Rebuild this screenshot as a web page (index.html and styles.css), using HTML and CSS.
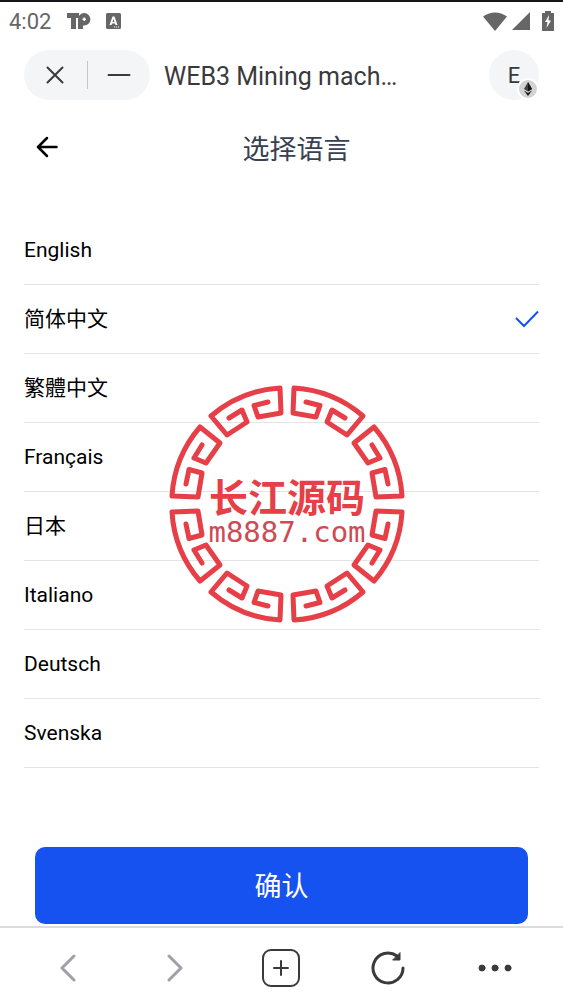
FILE: index.html
```
<!DOCTYPE html>
<html lang="zh-CN">
<head>
  <meta charset="UTF-8">
  <meta name="viewport" content="width=device-width, initial-scale=1.0">
  <title>选择语言</title>
  <link rel="stylesheet" href="styles.css">
</head>
<body>
  <div class="status-bar">
    <span class="clock">4:02</span>
    <svg class="status-tp" width="24" height="16" viewBox="0 0 24 16" aria-hidden="true">
      <path d="M0 0H12V5H9V16H4V5H0Z"/>
      <path fill-rule="evenodd" d="M11 16V6.500A6.200 6.200 0 1 1 17 12.500H16V16ZM16.500 4.500V5.500H15.500V7h1V8H18V7h1V5.500H18V4.500Z"/>
    </svg>
    <svg width="15" height="16" viewBox="0 0 15 16" aria-hidden="true">
      <path fill-rule="evenodd" d="M1.500 0h12A1.500 1.500 0 0 1 15 1.500v13a1.500 1.500 0 0 1-1.500 1.500h-12A1.500 1.500 0 0 1 0 14.500v-13A1.500 1.500 0 0 1 1.500 0ZM6.500 3.500 3.500 12h2l.5-1.500h3l.5 1.500h2l-3-8.500ZM7.500 6l1 3h-2ZM8 13.500v1h1v-1Zm2 0v1h1v-1Zm2 0v1h1v-1Z"/>
    </svg>
    <span class="status-right">
      <svg width="26" height="19" viewBox="0 0 26 19" aria-hidden="true"><path d="M1 4.500Q13-3.500 25 4.500L13 19Z"/></svg>
      <svg width="18" height="18" viewBox="0 0 18 18" aria-hidden="true"><path d="M18 0V18H0Z"/></svg>
      <svg class="battery" width="12" height="20" viewBox="0 0 12 20" aria-hidden="true"><path fill-rule="evenodd" d="M3 0h6v2h3v18H0V2h3ZM7 4 3 11h2.500L4.500 17 9 9.500H6.500Z"/></svg>
    </span>
  </div>

  <header class="app-bar">
    <div class="capsule">
      <button type="button" aria-label="关闭">
        <svg width="18" height="18" viewBox="0 0 18 18"><path d="M1.500 1.500 16.500 16.500M16.500 1.500 1.500 16.500"/></svg>
      </button>
      <button type="button" aria-label="最小化">
        <svg width="24" height="18" viewBox="0 0 24 18"><path d="M1.500 9H22.500"/></svg>
      </button>
    </div>
    <span class="app-name">WEB3 Mining mach…</span>
    <button type="button" class="account">
      E
      <svg class="chain" width="22" height="22" viewBox="0 0 22 22" aria-hidden="true">
        <circle cx="11" cy="11" r="10" fill="#d3d3d3" stroke="#fff" stroke-width="2"/>
        <path d="M11 4 7 11l4 2.500L15 11Z" fill="#444"/>
        <path d="M11 4V13.500L15 11ZM7 12.500l4 5.500 4-5.500-4 2.500Z" fill="#151515"/>
      </svg>
    </button>
  </header>

  <main>
    <div class="page-title">
      <button type="button" class="back" aria-label="返回">
        <svg width="22" height="22" viewBox="0 0 22 22"><path d="M11 2 2 11 11 20M2 11H20.500"/></svg>
      </button>
      <h1>选择语言</h1>
    </div>

    <form class="language-form">
      <div class="languages" role="radiogroup" aria-label="选择语言">
        <label lang="en"><span>English</span><input type="radio" name="language"><svg class="tick" viewBox="0 0 24 18"><path d="M1 8 9 16 23 1.500"/></svg></label>
        <label class="cjk"><span>简体中文</span><input type="radio" name="language" checked><svg class="tick" viewBox="0 0 24 18"><path d="M1 8 9 16 23 1.500"/></svg></label>
        <label class="cjk" lang="zh-TW"><span>繁體中文</span><input type="radio" name="language"><svg class="tick" viewBox="0 0 24 18"><path d="M1 8 9 16 23 1.500"/></svg></label>
        <label lang="fr"><span>Français</span><input type="radio" name="language"><svg class="tick" viewBox="0 0 24 18"><path d="M1 8 9 16 23 1.500"/></svg></label>
        <label class="cjk" lang="ja"><span>日本</span><input type="radio" name="language"><svg class="tick" viewBox="0 0 24 18"><path d="M1 8 9 16 23 1.500"/></svg></label>
        <label lang="it"><span>Italiano</span><input type="radio" name="language"><svg class="tick" viewBox="0 0 24 18"><path d="M1 8 9 16 23 1.500"/></svg></label>
        <label lang="de"><span>Deutsch</span><input type="radio" name="language"><svg class="tick" viewBox="0 0 24 18"><path d="M1 8 9 16 23 1.500"/></svg></label>
        <label lang="sv"><span>Svenska</span><input type="radio" name="language"><svg class="tick" viewBox="0 0 24 18"><path d="M1 8 9 16 23 1.500"/></svg></label>

        <svg class="seal" width="240" height="240" viewBox="-120 -120 240 240">
          <defs>
            <g id="seal-quarter">
              <path d="M-19-102-33-98.500-29-87-6-91-7-116A116 116 0 0 0-76-88L-60-69-40-82-45-94-58-86"/>
              <path d="M-85-59-93-46-81-41-67-61-87-77A116 116 0 0 0-115-8L-89-7-85-31-98-34.500-101-20"/>
            </g>
          </defs>
          <g class="seal-ring">
            <use href="#seal-quarter"/>
            <use href="#seal-quarter" transform="scale(-1 1)"/>
            <use href="#seal-quarter" transform="scale(1 -1)"/>
            <use href="#seal-quarter" transform="scale(-1 -1)"/>
          </g>
          <text class="seal-name" x="0" y="8">长江源码</text>
          <text class="seal-site" x="0" y="38">m8887.com</text>
        </svg>
      </div>

      <button type="submit" class="confirm">确认</button>
    </form>
  </main>

  <nav class="browser-bar">
    <button type="button" class="muted" aria-label="后退">
      <svg width="16" height="28" viewBox="0 0 16 28"><path d="M14 2 2 14 14 26"/></svg>
    </button>
    <button type="button" class="muted" aria-label="前进">
      <svg width="16" height="28" viewBox="0 0 16 28"><path d="M2 2 14 14 2 26"/></svg>
    </button>
    <button type="button" class="new-tab" aria-label="新标签页">
      <svg width="38" height="38" viewBox="0 0 38 38"><rect x="1" y="1" width="36" height="36" rx="8"/><path d="M19 12V26M12 19H26"/></svg>
    </button>
    <button type="button" aria-label="刷新">
      <svg width="34" height="34" viewBox="0 0 34 34"><path d="M32 17A15 15 0 1 1 26 5"/><path class="solid" d="M29 2V9H22Z"/></svg>
    </button>
    <button type="button" aria-label="更多">
      <svg width="34" height="8" viewBox="0 0 34 8"><g class="solid"><circle cx="4" cy="4" r="3"/><circle cx="17" cy="4" r="3"/><circle cx="30" cy="4" r="3"/></g></svg>
    </button>
  </nav>
</body>
</html>
```

FILE: styles.css
```
* {
  box-sizing: border-box;
}

body {
  display: flex;
  flex-direction: column;
  min-height: 100vh;
  margin: 0;
  border-top: 2px solid #15151c;
  background: #fff;
  color: #000;
  font-family: Roboto, "Noto Sans CJK SC", sans-serif;
}

button {
  display: flex;
  align-items: center;
  justify-content: center;
  padding: 0;
  border: 0;
  background: none;
  color: inherit;
  font: inherit;
  cursor: pointer;
}

button svg {
  fill: none;
  stroke: currentColor;
  stroke-width: 2;
  stroke-linecap: round;
  stroke-linejoin: round;
}

.status-bar {
  display: flex;
  align-items: center;
  height: 38px;
  padding: 0 9px;
  color: #666;
  font-size: 22px;
}

.status-bar svg {
  fill: #666;
}

.status-tp {
  margin: 0 15px 0 16px;
}

.status-right {
  display: flex;
  align-items: center;
  gap: 4px;
  margin-left: auto;
}

.battery {
  margin-left: 8px;
}

.app-bar {
  display: flex;
  align-items: center;
  padding: 10px 24px;
  color: #3a3a3c;
}

.capsule {
  display: flex;
  align-items: center;
  width: 126px;
  height: 50px;
  border-radius: 25px;
  background: #f4f5f7;
}

.capsule button {
  flex: 1;
  height: 28px;
}

.capsule button + button {
  border-left: 1px solid #c8c8ca;
}

.app-name {
  flex: 1;
  margin-left: 14px;
  padding-top: 2px;
  font-size: 25px;
  white-space: nowrap;
}

.account {
  position: relative;
  width: 50px;
  height: 50px;
  border-radius: 50%;
  background: #f4f5f7;
  font-size: 22px;
}

.chain {
  position: absolute;
  right: 0;
  bottom: 0;
}

.account .chain {
  stroke: none;
}

main {
  flex: 1;
  padding: 0 24px;
}

.page-title {
  display: grid;
  grid-template-columns: 46px 1fr 16px;
  align-items: center;
  height: 74px;
}

.back svg {
  stroke-width: 2.5;
}

.page-title h1 {
  margin: 0;
  color: #374151;
  font-size: 27px;
  font-weight: 400;
  text-align: center;
}

.languages {
  position: relative;
  margin-top: 32px;
}

.languages label {
  display: flex;
  align-items: center;
  justify-content: space-between;
  height: 69px;
  border-bottom: 1px solid #e4e4e4;
  font-size: 21px;
  cursor: pointer;
}

.languages .cjk span {
  padding-bottom: 4px;
}

.languages input {
  appearance: none;
  width: 0;
  margin: 0;
}

.tick {
  display: none;
  width: 24px;
  height: 18px;
  fill: none;
  stroke: #1652f0;
  stroke-width: 2;
}

input:checked + .tick {
  display: block;
}

/* stamp lies over the list */
.seal {
  position: absolute;
  top: 168px;
  left: calc(50% + 5px);
  transform: translateX(-50%);
  pointer-events: none;
}

.seal-ring {
  fill: none;
  stroke: #e63f48;
  stroke-width: 5;
  stroke-linecap: round;
  stroke-linejoin: round;
}

.seal text {
  text-anchor: middle;
}

.seal-name {
  fill: #e63f48;
  font-size: 39px;
  font-weight: 700;
}

.seal-site {
  fill: #cc4b54;
  font-family: "DejaVu Sans Mono", monospace;
  font-size: 29px;
}

.confirm {
  width: calc(100% - 22px);
  height: 77px;
  margin: 79px 11px 2px;
  padding-bottom: 2px;
  border-radius: 10px;
  background: #1652f0;
  color: #fff;
  font-size: 27px;
}

.browser-bar {
  display: flex;
  height: 80px;
  padding: 2px 15px 0;
  border-top: 2px solid #dcdcde;
  color: #3a3a3c;
}

.browser-bar button {
  flex: 1;
}

.browser-bar svg {
  stroke-width: 3;
}

.browser-bar .new-tab svg {
  stroke-width: 2;
}

.browser-bar .muted {
  color: #a0a0a6;
}

.browser-bar .solid {
  fill: currentColor;
  stroke-width: 1;
}
```
